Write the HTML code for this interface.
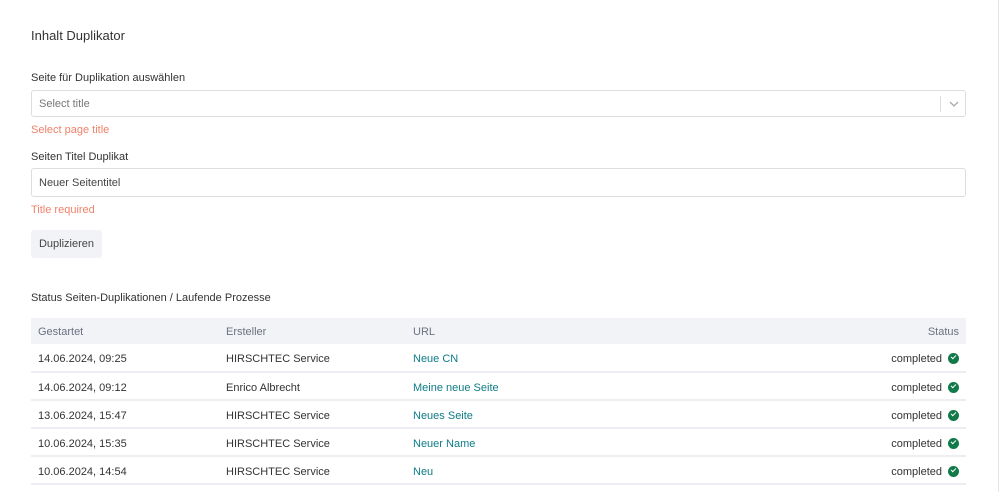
<!DOCTYPE html>
<html><head><style>
body{margin:0;width:1000px;height:492px;background:#fff;font-family:"Liberation Sans",sans-serif;color:#333;position:relative;overflow:hidden;font-size:11px}
.a{position:absolute}
.inp{position:absolute;left:31px;width:935px;border:1px solid #dcdde1;border-radius:3px;background:#fff;box-sizing:border-box}
.err{color:#f0826a;font-size:11px}
table{position:absolute;left:31px;top:318px;width:935px;border-collapse:collapse;font-size:11px}
th{background:#f2f3f6;color:#6b7280;font-weight:normal;text-align:left;height:26px;padding:2px 0 0 7px;box-sizing:border-box}
td{height:28px;border-bottom:2px solid #eceef2;padding:3px 0 0 7px;color:#333;box-sizing:border-box}
td a{color:#0e7c86;text-decoration:none}
.r{text-align:right;padding-right:7px}
.ck{display:inline-block;width:11px;height:11px;border-radius:50%;background:#12794a;vertical-align:-2px;margin-left:6px;position:relative}
.ck:after{content:"";position:absolute;left:3px;top:2px;width:4px;height:2px;border-left:1.5px solid #fff;border-bottom:1.5px solid #fff;transform:rotate(-45deg)}
</style></head><body>
<div class="a" style="right:1px;top:0;width:1px;height:492px;background:#e5e6ea"></div>
<div class="a" style="left:31px;top:28px;font-size:13px;color:#333">Inhalt Duplikator</div>
<div class="a" style="left:31px;top:72px">Seite für Duplikation auswählen</div>
<div class="inp" style="top:90px;height:27px"><span class="a" style="left:7px;top:7px;color:#777">Select title</span>
<span class="a" style="left:908px;top:5px;width:1px;height:16px;background:#ddd"></span>
<svg class="a" style="left:917px;top:9px" width="10" height="8" viewBox="0 0 10 8"><path d="M1 2l4 4 4-4" fill="none" stroke="#aaa" stroke-width="1.3"/></svg></div>
<div class="a err" style="left:31px;top:124px">Select page title</div>
<div class="a" style="left:31px;top:151px">Seiten Titel Duplikat</div>
<div class="inp" style="top:168px;height:29px"><span class="a" style="left:7px;top:8px;color:#444">Neuer Seitentitel</span></div>
<div class="a err" style="left:31px;top:204px">Title required</div>
<div class="a" style="left:31px;top:230px;width:71px;height:28px;background:#f2f3f6;border-radius:3px;line-height:29px;text-align:center;color:#444">Duplizieren</div>
<div class="a" style="left:31px;top:292px">Status Seiten-Duplikationen / Laufende Prozesse</div>
<table>
<tr><th style="width:188px">Gestartet</th><th style="width:187px">Ersteller</th><th>URL</th><th class="r" style="text-align:right">Status</th></tr>
<tr><td>14.06.2024, 09:25</td><td>HIRSCHTEC Service</td><td><a>Neue CN</a></td><td class="r">completed<span class="ck"></span></td></tr>
<tr><td>14.06.2024, 09:12</td><td>Enrico Albrecht</td><td><a>Meine neue Seite</a></td><td class="r">completed<span class="ck"></span></td></tr>
<tr><td>13.06.2024, 15:47</td><td>HIRSCHTEC Service</td><td><a>Neues Seite</a></td><td class="r">completed<span class="ck"></span></td></tr>
<tr><td>10.06.2024, 15:35</td><td>HIRSCHTEC Service</td><td><a>Neuer Name</a></td><td class="r">completed<span class="ck"></span></td></tr>
<tr><td>10.06.2024, 14:54</td><td>HIRSCHTEC Service</td><td><a>Neu</a></td><td class="r">completed<span class="ck"></span></td></tr>
</table>
</body></html>
